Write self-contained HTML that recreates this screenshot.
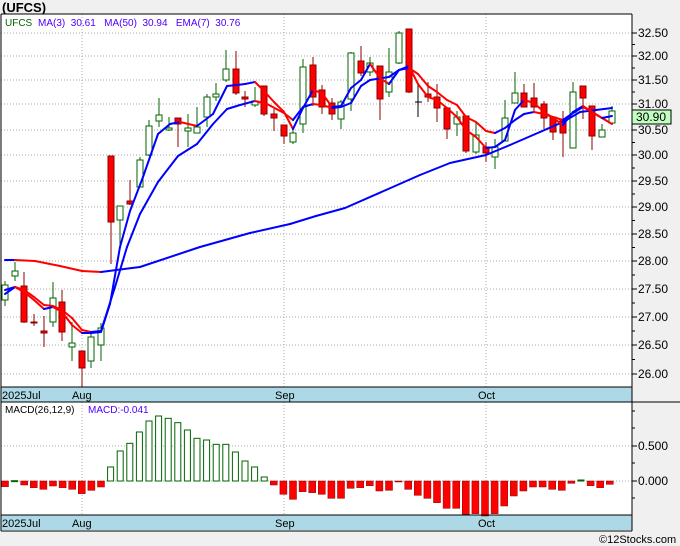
<!DOCTYPE html>
<html><head><meta charset="utf-8"><style>
html,body{margin:0;padding:0;background:#f0f0f0;width:680px;height:546px;overflow:hidden}
svg{display:block;font-family:"Liberation Sans",sans-serif}
</style></head><body>
<svg id="s" width="680" height="546" xmlns="http://www.w3.org/2000/svg">
<rect x="0" y="0" width="680" height="546" fill="#f0f0f0"/>
<rect x="1" y="14" width="631" height="517" fill="#fff"/>
<text x="2" y="12" font-size="13" font-weight="bold" fill="#000">(UFCS)</text>
<g id="grid"></g>
<rect x="1" y="387" width="631" height="15" fill="#add8e6"/>
<rect x="1" y="515" width="631" height="15" fill="#add8e6"/>
<g font-size="11" fill="#000">
<text x="2" y="399">2025Jul</text><text x="72" y="399">Aug</text><text x="275" y="399">Sep</text><text x="478" y="399">Oct</text>
<text x="2" y="527">2025Jul</text><text x="72" y="527">Aug</text><text x="275" y="527">Sep</text><text x="478" y="527">Oct</text>
</g>
<g id="plot"></g>
<line x1="1" y1="14" x2="632" y2="14" stroke="#000"/>
<line x1="632" y1="14" x2="632" y2="531" stroke="#000"/>
<line x1="1" y1="14" x2="1" y2="531" stroke="#000"/>
<line x1="1" y1="387" x2="632" y2="387" stroke="#000"/>
<line x1="1" y1="402" x2="680" y2="402" stroke="#000"/>
<line x1="1" y1="515" x2="632" y2="515" stroke="#000"/>
<line x1="1" y1="531" x2="632" y2="531" stroke="#000"/>
<g font-size="10">
<text x="5" y="26" fill="#006400">UFCS</text>
<text x="38" y="26" fill="#5000ff">MA(3)&#160;&#160;30.61&#160;&#160;&#160;MA(50)&#160;&#160;30.94&#160;&#160;&#160;EMA(7)&#160;&#160;30.76</text>
<text x="5" y="413" fill="#000">MACD(26,12,9)</text>
<text x="88" y="413" fill="#5000ff">MACD:-0.041</text>
</g>
<g id="axis" font-size="12" fill="#000"></g>
<rect x="632" y="110" width="39" height="14" fill="#c0ffc0" stroke="#000"/>
<text x="636" y="121" font-size="12" fill="#000">30.90</text>
<text x="599" y="543" font-size="11" fill="#000">©12Stocks.com</text>
</svg>
<script>
var NS="http://www.w3.org/2000/svg";
function el(p,t,a){var e=document.createElementNS(NS,t);for(var k in a)e.setAttribute(k,a[k]);document.getElementById(p).appendChild(e);return e;}
var lv=[["32.50",33],["32.00",56],["31.50",80],["31.00",104],["30.50",130],["30.00",155],["29.50",181],["29.00",207],["28.50",234],["28.00",261],["27.50",289],["27.00",317],["26.50",345],["26.00",374]];
lv.forEach(function(l){el("grid","line",{x1:1,x2:632,y1:l[1],y2:l[1],stroke:"#aaa","stroke-dasharray":"1,2"});
el("axis","line",{x1:632,x2:637,y1:l[1],y2:l[1],stroke:"#000"});
var t=el("axis","text",{x:638,y:l[1]+4});t.textContent=l[0];});
for(var i=0;i<lv.length-1;i++){var m=(lv[i][1]+lv[i+1][1])/2;el("axis","line",{x1:632,x2:635,y1:m,y2:m,stroke:"#000"});}
[["0.500",446],["0.000",481]].forEach(function(l){el("grid","line",{x1:1,x2:632,y1:l[1],y2:l[1],stroke:"#aaa","stroke-dasharray":"1,2"});
el("axis","line",{x1:632,x2:637,y1:l[1],y2:l[1],stroke:"#000"});var t=el("axis","text",{x:638,y:l[1]+4});t.textContent=l[0];});
[411,428,463,498].forEach(function(y){el("axis","line",{x1:632,x2:635,y1:y,y2:y,stroke:"#000"});});
[82,284,486].forEach(function(x){el("grid","line",{x1:x,x2:x,y1:14,y2:387,stroke:"#aaa","stroke-dasharray":"1,2"});el("grid","line",{x1:x,x2:x,y1:402,y2:515,stroke:"#aaa","stroke-dasharray":"1,2"});});
var C=[[5,"g",285,300,281,306],[15,"g",271,276,262,281],[24,"r",286,322,272,323],[34,"r",322,323,314,326],[44,"r",331,333,316,347],[53,"g",298,322,282,327],[62,"r",302,332,290,341],[72,"g",343,347,322,361],[82,"r",351,368,351,387],[91,"g",337,361,332,368],[101,"g",328,345,323,361],[111,"r",156,222,156,264],[120,"g",206,220,206,247],[130,"r",201,204,180,205],[140,"g",160,187,157,187],[149,"g",126,155,120,156],[159,"g",115,121,98,127],[169,"g",128,130,117,131],[178,"r",118,124,118,147],[188,"g",128,131,114,147],[197,"g",127,133,107,133],[207,"g",97,117,94,127],[216,"g",94,97,83,101],[226,"g",69,80,50,82],[236,"r",69,93,51,95],[245,"r",97,99,91,107],[255,"g",101,105,87,107],[264,"r",86,114,86,116],[274,"r",114,118,109,131],[284,"r",125,136,125,144],[293,"g",133,142,130,144],[303,"g",67,124,59,133],[313,"r",65,97,57,106],[322,"r",90,107,85,114],[332,"r",103,114,98,120],[341,"g",102,119,100,129],[351,"g",53,99,52,111],[361,"r",61,73,46,76],[370,"g",63,72,57,76],[380,"r",66,99,66,120],[389,"g",72,92,48,97],[399,"g",33,63,31,64],[409,"r",29,92,29,93],[418,"k",102,102,84,117],[428,"r",94,97,82,102],[437,"r",97,108,84,122],[447,"r",108,129,108,139],[457,"g",117,124,111,136],[466,"r",116,151,116,153],[476,"g",135,152,121,154],[486,"r",147,153,142,162],[495,"g",147,157,139,169],[505,"g",118,141,100,141],[515,"g",93,103,72,103],[524,"r",93,107,84,107],[534,"r",98,107,83,111],[544,"r",104,118,101,129],[553,"r",117,132,116,140],[563,"r",120,133,111,157],[573,"g",92,148,82,148],[583,"r",86,98,86,119],[592,"r",106,136,106,150],[602,"g",130,137,124,137],[612,"g",111,123,106,124]];
function sl(pts,w){for(var i=1;i<pts.length;i++){var a=pts[i-1],b=pts[i];
el("plot","line",{x1:a[0],y1:a[1],x2:b[0],y2:b[1],stroke:b[1]<=a[1]?"#00f":"#f00","stroke-width":w,"stroke-linecap":"round"});}}
C.forEach(function(c){var col=c[1]=="g"?"#006400":c[1]=="r"?"#8b0000":"#000";
el("plot","line",{x1:c[0],x2:c[0],y1:c[4],y2:c[5],stroke:col});
if(c[1]=="k"){el("plot","line",{x1:c[0]-3,x2:c[0]+4,y1:c[2],y2:c[2],stroke:"#000"});}
else el("plot","rect",{x:c[0]-3,y:c[2],width:6,height:Math.max(1,c[3]-c[2]),fill:c[1]=="g"?"#fff":"#f00",stroke:c[1]=="g"?"#006400":"#8b0000","stroke-width":1});});
sl([[5,260],[15,260],[35,261],[60,266],[82,271],[101,272],[140,267],[200,247],[250,233],[290,224],[316,216],[345,208],[386,190],[420,175],[450,163],[486,155],[510,145],[540,132],[563,122],[580,112],[612,108]],2);
sl([[5,290],[15,287],[24,290],[34,297],[44,305],[53,306],[62,310],[72,318],[82,330],[91,332],[101,331],[115,287],[127,247],[140,214],[158,182],[178,156],[197,144],[213,124],[227,109],[240,105],[255,101],[267,104],[284,113],[293,120],[303,107],[313,104],[322,105],[332,108],[341,107],[351,103],[361,86],[370,80],[389,77],[399,70],[409,68],[418,74],[428,86],[437,92],[447,100],[457,105],[466,117],[476,122],[486,131],[495,133],[505,128],[515,120],[524,114],[534,112],[544,114],[553,117],[563,120],[573,113],[583,107],[592,112],[602,118],[612,124]],2);
sl([[5,294],[15,287],[24,292],[34,300],[44,309],[53,307],[62,312],[72,325],[82,333],[91,333],[101,332],[110,304],[120,247],[130,211],[143,177],[158,134],[170,124],[180,122],[197,126],[213,114],[227,86],[237,85],[245,84],[255,82],[264,91],[274,102],[284,112],[293,129],[303,108],[313,90],[322,93],[332,107],[341,106],[351,88],[361,80],[370,64],[380,78],[389,84],[399,70],[409,66],[418,84],[428,97],[437,100],[447,108],[457,117],[466,130],[476,137],[486,148],[495,147],[505,140],[515,110],[524,100],[534,103],[544,112],[553,118],[563,125],[573,112],[583,106],[592,112],[602,118],[612,116]],2);
var M=[-17,1,-12,-20,-25,-15,-20,-25,-38,-28,-18,42,90,113,147,180,195,188,175,153,128,123,110,110,87,60,42,12,-12,-40,-55,-32,-35,-40,-52,-52,-22,-20,-14,-30,-28,-3,-25,-43,-52,-65,-82,-82,-100,-98,-105,-98,-75,-45,-30,-18,-18,-25,-28,-7,3,-14,-20,-10];
M.forEach(function(v,i){var x=5+i*9.6,h=v/3;
if(v>0)el("plot","rect",{x:x-3,y:481-h,width:6,height:Math.max(1,h),fill:"#fff",stroke:"#006400"});
else el("plot","rect",{x:x-3.5,y:481,width:7,height:Math.max(1,-h),fill:"#f00",stroke:"#8b0000","stroke-width":0.5});});
</script>
</body></html>
